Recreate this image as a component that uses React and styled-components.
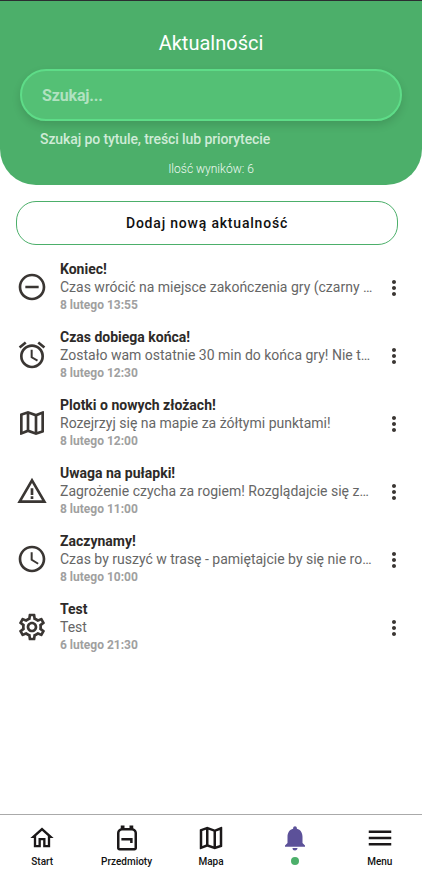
import React from "react";
import styled, { createGlobalStyle } from "styled-components";
import {
  MdRemoveCircleOutline, MdOutlineAlarm, MdOutlineMap, MdWarningAmber, MdAccessTime,
  MdOutlineSettings, MdMoreVert, MdOutlineHome, MdOutlineBackpack, MdNotifications, MdMenu,
} from "react-icons/md";

const GlobalStyle = createGlobalStyle`
  *, *::before, *::after { box-sizing: border-box; }
  body {
    margin: 0;
    background: #fff;
    font-family: Roboto, "Liberation Sans", sans-serif;
  }
`;

const Page = styled.div`
  display: flex;
  flex-direction: column;
  height: 882px;
  overflow: hidden;
  border-top: 1px solid #2b2d31;
`;

const Header = styled.header`
  display: flex;
  flex-direction: column;
  flex: none;
  height: 184px;
  padding: 30px 20px 0;
  background: #4caf6a;
  border-radius: 0 0 36px 36px;
  color: #fff;
`;

const Title = styled.h1`
  margin: 0 0 14px;
  font-size: 20px;
  line-height: 24px;
  font-weight: 400;
  text-align: center;
`;

const Search = styled.input`
  width: 382px;
  height: 52px;
  padding: 0 20px;
  border: 2px solid #5edc88;
  border-radius: 26px;
  background: #54c075;
  box-shadow: 0 4px 8px rgba(0, 0, 0, 0.13);
  font: 700 16px Roboto, sans-serif;
  letter-spacing: -0.15px;
  color: #fff;
  outline: none;
  &::placeholder { color: #b1e2c0; opacity: 1; }
`;

const Hint = styled.p`
  margin: 10px 20px 0;
  font-size: 14px;
  line-height: 16px;
  font-weight: 500;
  letter-spacing: -0.1px;
  color: #cfebd7;
`;

const Count = styled.p`
  margin: 15px 0 0;
  font-size: 12px;
  line-height: 14px;
  font-weight: 300;
  text-align: center;
  color: #f0faf3;
`;

const AddButton = styled.button`
  flex: none;
  width: 382px;
  height: 44px;
  margin: 16px 16px 15px;
  border: 1px solid #4caf6a;
  border-radius: 20px;
  background: #fff;
  font: 500 14px Roboto, sans-serif;
  letter-spacing: 0.8px;
  color: #111;
`;

const List = styled.ul`
  flex: 1;
  margin: 0;
  padding: 0;
  list-style: none;
`;

const Item = styled.li`
  display: grid;
  grid-template-columns: 32px 312px 24px;
  column-gap: 12px;
  align-items: center;
  height: 54px;
  margin-bottom: 14px;
  padding-left: 16px;
  color: #3a3633;
  & > svg:last-child { margin: 2px 0 0 -2px; }
`;

const Texts = styled.div`
  min-width: 0;
`;

const Heading = styled.h2`
  margin: 0;
  font-size: 14px;
  line-height: 18px;
  font-weight: 700;
  color: #2d2a28;
`;

const Body = styled.p`
  margin: 0;
  font-size: 14px;
  line-height: 18px;
  color: #666;
  white-space: nowrap;
`;

const Time = styled.time`
  display: block;
  font-size: 12px;
  line-height: 18px;
  font-weight: 700;
  color: #a0a0a0;
`;

const Nav = styled.nav`
  display: grid;
  grid-template-columns: repeat(5, 1fr);
  flex: none;
  height: 68px;
  border-top: 1px solid #aaa;
`;

const Tab = styled.a`
  display: flex;
  flex-direction: column;
  align-items: center;
  padding-top: 7.5px;
  color: ${(p) => (p.$active ? "#5c5199" : "#1b1819")};
`;

const IconSlot = styled.span`
  display: grid;
  place-items: center;
  height: 30px;
`;

const Label = styled.span`
  margin-top: 3.5px;
  font-size: 10px;
  line-height: 12px;
  font-weight: 500;
  color: #111;
`;

const Dot = styled.span`
  width: 8px;
  height: 8px;
  margin-top: 4.5px;
  border-radius: 50%;
  background: #4caf6a;
`;

const news = [
  [MdRemoveCircleOutline, "Koniec!", "Czas wrócić na miejsce zakończenia gry (czarny …", "8 lutego 13:55"],
  [MdOutlineAlarm, "Czas dobiega końca!", "Zostało wam ostatnie 30 min do końca gry! Nie t…", "8 lutego 12:30"],
  [MdOutlineMap, "Plotki o nowych złożach!", "Rozejrzyj się na mapie za żółtymi punktami!", "8 lutego 12:00"],
  [MdWarningAmber, "Uwaga na pułapki!", "Zagrożenie czycha za rogiem! Rozglądajcie się z…", "8 lutego 11:00"],
  [MdAccessTime, "Zaczynamy!", "Czas by ruszyć w trasę - pamiętajcie by się nie ro…", "8 lutego 10:00"],
  [MdOutlineSettings, "Test", "Test", "6 lutego 21:30"],
];

const tabs = [
  [MdOutlineHome, "Start", 28],
  [MdOutlineBackpack, "Przedmioty", 30],
  [MdOutlineMap, "Mapa", 30],
  [MdNotifications, null, 30],
  [MdMenu, "Menu", 30],
];

export default function App() {
  return (
    <Page>
      <GlobalStyle />
      <Header>
        <Title>Aktualności</Title>
        <Search placeholder="Szukaj..." />
        <Hint>Szukaj po tytule, treści lub priorytecie</Hint>
        <Count>Ilość wyników: 6</Count>
      </Header>
      <AddButton>Dodaj nową aktualność</AddButton>
      <List>
        {news.map(([Icon, title, body, time]) => (
          <Item key={title}>
            <Icon size={32} />
            <Texts>
              <Heading>{title}</Heading>
              <Body>{body}</Body>
              <Time>{time}</Time>
            </Texts>
            <MdMoreVert size={24} />
          </Item>
        ))}
      </List>
      <Nav>
        {tabs.map(([Icon, label, size], i) => (
          <Tab key={i} $active={!label}>
            <IconSlot><Icon size={size} /></IconSlot>
            {label ? <Label>{label}</Label> : <Dot />}
          </Tab>
        ))}
      </Nav>
    </Page>
  );
}
